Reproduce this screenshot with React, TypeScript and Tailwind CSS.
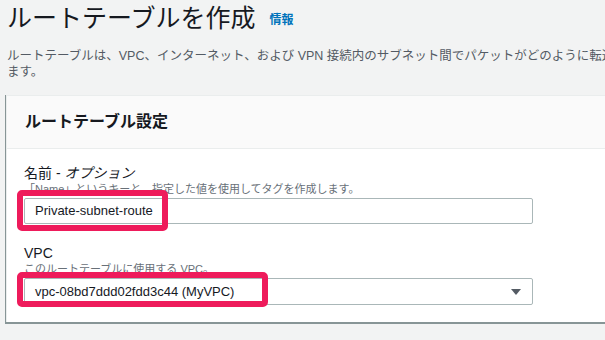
import React from "react";

const jp = { fontFamily: '"Liberation Sans","Noto Sans CJK JP",sans-serif' };

export default function App() {
  return (
    <div
      className="w-[605px] h-[340px] overflow-hidden bg-[#f2f3f3] text-[#16191f]"
      style={jp}
    >
      <div className="w-[700px] pl-[7px] pt-[3px]">
        <div className="flex items-center gap-[14px] h-[30px]">
          <h1 className="text-[25px] leading-[30px] font-normal text-[#16191f]">
            ルートテーブルを作成
          </h1>
          <a className="text-[12px] font-bold text-[#0073bb] mt-[3px]">情報</a>
        </div>
        <p className="mt-[15px] text-[12.5px] leading-[16px] text-[#545b64] whitespace-nowrap">
          ルートテーブルは、VPC、インターネット、および VPN 接続内のサブネット間でパケットがどのように転送されるかを決定し
          <br />
          ます。
        </p>
      </div>

      <div className="ml-[6px] mt-[15px] w-[700px] bg-white border-l border-t border-[#eaeded] shadow-[0_1px_0_1px_#879596]">
        <div className="h-[53px] flex items-center pl-[18px] bg-[#fafafa] border-b border-[#eaeded]">
          <h2 className="text-[16px] font-bold text-[#16191f]">ルートテーブル設定</h2>
        </div>
        <div className="pl-[17px] pt-[15px] pb-[17px]">
          <div className="text-[14px] leading-[18px] text-[#16191f]">
            名前 - <span className="italic">オプション</span>
          </div>
          <div className="text-[11px] leading-[14px] text-[#687078]">
            「Name」というキーと、指定した値を使用してタグを作成します。
          </div>
          <div className="relative mt-[2px] w-[509px] h-[26px] border border-[#aab7b8] rounded-[2px] flex items-center pl-[10px] text-[13px]">
            Private-subnet-route
            <div className="absolute left-[-8px] top-[-9px] w-[151px] h-[41px] border-[6px] border-[#ee1b5b] rounded-[5px]" />
          </div>
          <div className="mt-[20px] text-[14px] leading-[18px] text-[#16191f]">VPC</div>
          <div className="text-[11px] leading-[14px] text-[#687078]">
            このルートテーブルに使用する VPC。
          </div>
          <div className="relative mt-[2px] w-[509px] h-[27px] border border-[#aab7b8] rounded-[2px] flex items-center pl-[10px] text-[13px]">
            vpc-08bd7ddd02fdd3c44 (MyVPC)
            <svg
              className="absolute right-[11px] top-[10px]"
              width="10"
              height="6"
              viewBox="0 0 10 6"
            >
              <path d="M0 0 H10 L5 6 Z" fill="#545b64" />
            </svg>
            <div className="absolute left-[-8px] top-[-7px] w-[251px] h-[35px] border-[6px] border-[#ee1b5b] rounded-[5px]" />
          </div>
        </div>
      </div>
    </div>
  );
}
